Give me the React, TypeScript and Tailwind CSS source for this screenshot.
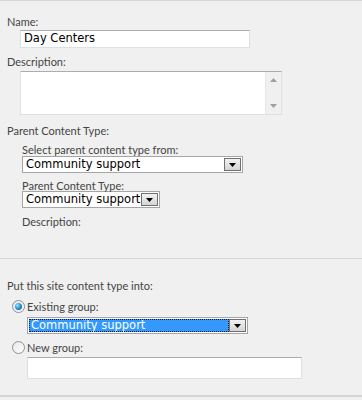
import React from 'react';

const labelCls = "text-[11px] leading-[15px] text-[#444444] [font-family:Lato,'Liberation_Sans',sans-serif]";
const tightLabel = "text-[11px] leading-[13px] text-[#444444] [font-family:Lato,'Liberation_Sans',sans-serif]";
const fieldFont = "[font-family:'DejaVu_Sans',Verdana,sans-serif] text-[11.5px] whitespace-nowrap";

const DropButton: React.FC = () => (
    <div className="w-[17px] shrink-0 h-full border border-[#707070] bg-gradient-to-b from-[#f2f2f2] to-[#d4d4d4] flex items-center justify-center">
        <svg width="7" height="4" viewBox="0 0 7 4">
            <path d="M0 0 H7 L3.5 4 Z" fill="#000" />
        </svg>
    </div>
);

const Select: React.FC<{ width: string; selected?: boolean }> = ({ width, selected }) => (
    <div className={`${width} h-[17px] border border-[#a5a5a5] bg-white flex items-stretch p-px`}>
        <div
            className={`flex-1 min-w-0 overflow-hidden flex items-center px-[2px] leading-none ${fieldFont} ${
                selected ? 'bg-[#3399ff] text-white outline-1 outline-dotted outline-[#1a1a1a] -outline-offset-1' : 'text-black'
            }`}
        >
            Community support
        </div>
        <DropButton />
    </div>
);

const Radio: React.FC<{ checked?: boolean }> = ({ checked }) => (
    <div className="w-[13px] h-[13px] rounded-full border border-[#8f8f8f] bg-gradient-to-br from-[#e6e6e6] to-[#ffffff] flex items-center justify-center">
        {checked && (
            <div className="w-[7px] h-[7px] rounded-full bg-[radial-gradient(circle_at_35%_35%,#9fe3ff,#1a8ad0_55%,#0c4f8c)]" />
        )}
    </div>
);

const App: React.FC = () => {
    return (
        <div className="w-[362px] h-[400px] bg-[#f0f0f0] border-t border-[#d6d6d6] overflow-hidden">
            {/* Name / description */}
            <section className="pl-[7px] pt-[13px]">
                <div className={labelCls}>Name:</div>
                <div className="ml-[13px] mt-px w-[230px] h-[18px] bg-white border border-[#dbe0e6] border-t-[#abadb3] flex items-center px-[3px]">
                    <span className={`${fieldFont} text-black`}>Day Centers</span>
                </div>
                <div className={`${labelCls} mt-[6px]`}>Description:</div>
                <div className="ml-[13px] mt-[2px] w-[262px] h-[44px] bg-white border border-[#dbe0e6] border-t-[#abadb3] flex justify-end">
                    <div className="w-[16px] h-full bg-[#f0f0f0] border-l border-[#e6e6e6] flex flex-col items-center justify-between py-[6px]">
                        <svg width="7" height="4" viewBox="0 0 7 4"><path d="M0 4 H7 L3.5 0 Z" fill="#a0a0a0" /></svg>
                        <svg width="7" height="4" viewBox="0 0 7 4"><path d="M0 0 H7 L3.5 4 Z" fill="#a0a0a0" /></svg>
                    </div>
                </div>

                <div className={`${labelCls} mt-[8px]`}>Parent Content Type:</div>
                <div className="ml-[15px] mt-[5px]">
                    <div className={tightLabel}>Select parent content type from:</div>
                    <Select width="w-[221px]" />
                    <div className={`${tightLabel} mt-[6px]`}>Parent Content Type:</div>
                    <div className="-mt-px">
                        <Select width="w-[138px]" />
                    </div>
                    <div className={`${labelCls} mt-[6px]`}>Description:</div>
                </div>
            </section>

            {/* Group */}
            <div className="mt-[29px] border-t border-[#d5d5d5]" />
            <section className="pl-[7px] pt-[19px]">
                <div className={labelCls}>Put this site content type into:</div>
                <div className="mt-[6px] ml-[5px] flex items-center gap-[2px]">
                    <Radio checked />
                    <span className={labelCls}>Existing group:</span>
                </div>
                <div className="ml-[20px] mt-[3px]">
                    <Select width="w-[221px]" selected />
                </div>
                <div className="mt-[6px] ml-[5px] flex items-center gap-[2px]">
                    <Radio />
                    <span className={labelCls}>New group:</span>
                </div>
                <div className="ml-[20px] mt-[2px] w-[275px] h-[22px] bg-white border border-[#dbe0e6] border-t-[#abadb3]" />
            </section>
            <div className="mt-[16px] border-t-2 border-[#d5d5d5]" />
        </div>
    );
};

export default App;
